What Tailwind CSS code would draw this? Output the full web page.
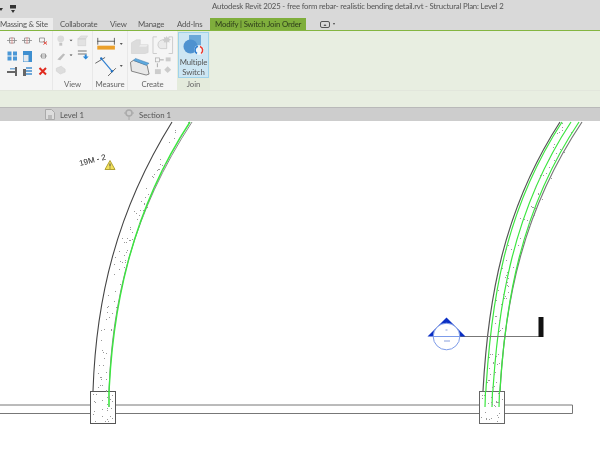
<!DOCTYPE html>
<html lang="en">
<head>
<meta charset="UTF-8" />
<title>Autodesk Revit 2025</title>
<script src="https://cdn.jsdelivr.net/npm/@tailwindcss/browser@4"></script>
</head>
<body class="bg-white font-['Lato',sans-serif] text-[#555] overflow-hidden">
<div class="w-[600px] h-[454px] flex flex-col overflow-hidden blur-[0.3px]">

  <!-- title bar -->
  <div class="h-[18px] bg-[#d9d9d9] flex items-center relative">
    <span class="w-0 h-0 border-x-[2px] border-x-transparent border-t-[3px] border-t-[#333] -ml-[1px] mr-[7px]"></span>
    <svg width="6" height="8" viewBox="0 0 6 8"><path d="M0 0h6v3.500h-6zM1 5h4l-2 3z" fill="#333"/></svg>
    <div class="absolute left-[212px] top-0 text-[7.8px] tracking-[-0.18px] leading-[13px] whitespace-nowrap">Autodesk Revit 2025 - free form rebar- realistic bending detail.rvt - Structural Plan: Level 2</div>
  </div>

  <!-- ribbon tabs -->
  <div class="h-[12px] bg-[#d9d9d9] flex items-stretch text-[7.8px] tracking-[-0.18px] leading-[12px] whitespace-nowrap">
    <div class="w-[53px] bg-[#ececec] overflow-hidden">Massing &amp; Site</div>
    <div class="ml-[7px] w-[50px]">Collaborate</div>
    <div class="w-[28px]">View</div>
    <div class="w-[39px]">Manage</div>
    <div class="w-[33px]">Add-Ins</div>
    <div class="w-[96px] bg-[#7fae3c] text-[#2d3d1a] pl-[5px]">Modify | Switch Join Order</div>
    <div class="ml-[14px] flex items-center gap-[3px]">
      <svg width="10" height="7" viewBox="0 0 10 7"><rect x=".5" y=".5" width="9" height="6" rx="1.500" fill="none" stroke="#555"/><path d="M3.500 5l1.500-2 1.500 2z" fill="#555"/></svg>
      <span class="w-0 h-0 border-x-[1.500px] border-x-transparent border-t-[2px] border-t-[#444]"></span>
    </div>
  </div>

  <!-- ribbon -->
  <div class="h-[60px] bg-[#e8eee1] border-t-[1px] border-t-[#84b541] flex text-[7.8px] tracking-[-0.1px] leading-[12px] text-[#666]">
    <div class="w-[52px] bg-[#f5f5f5] flex flex-col">
      <svg width="52" height="47" viewBox="0 30 52 47">
        <g fill="none" stroke="#8a8a8a" stroke-width=".8">
          <path d="M7 39.500h10M9.500 37h5v5h-5z"/><path d="M22 39.500h10M24.500 37h5v5h-5z"/>
          <path d="M39.500 37h5v4h-5z"/><path d="M40 55h7M41.500 53h4v4h-4z"/>
        </g>
        <path d="M12 36v7M27 36v7" stroke="#e88" stroke-width=".7"/>
        <path d="M43.500 40.500l3.500 3M47 40.500l-3.500 3" stroke="#e0453a"/>
        <path d="M7.500 50.500h4v4h-4zM13 50.500h4v4h-4zM7.500 55.500h4v4h-4zM13 55.500h4v4h-4z" fill="#4a97d6"/>
        <path d="M23 50h9v11h-9z" fill="#3e8fd0"/><path d="M23.500 54h5v6.500h-5z" fill="#e3e9ee"/>
        <path d="M7 70h8v-4h2v9h-2v-3h-8z" fill="#666"/><path d="M10 67h5v1.500h-5z" fill="#7aaedb"/>
        <path d="M26 66h6v2h-6zM26 69h6v2h-6zM26 72h6v2h-6z" fill="#6ea7d8"/><path d="M23 68h3v7h-3z" fill="#666"/>
        <path d="M39.500 67l6.500 6.500M46 67l-6.500 6.500" stroke="#e02a1e" stroke-width="2"/>
      </svg>
    </div>

    <div class="w-[40px] bg-[#f5f5f5] border-l-[1px] border-l-[#e8e8e8] flex flex-col">
      <svg width="39" height="47" viewBox="53 30 39 47" class="h-[47px]">
        <circle cx="60.500" cy="38" r="3.500" fill="#dcdcdc"/><path d="M59 42h3v3h-3z" fill="#c4c4c4"/>
        <path d="M69.500 39h3l-1.500 1.500z" fill="#444"/>
        <path d="M78 38h8v7h-8zM81 35h7l-2 3h-8z" fill="#e2e2e2" stroke="#ccc" stroke-width=".5"/>
        <path d="M57 59l6-6 2 1-5 6z" fill="#bdbdbd"/><path d="M69.500 54h3l-1.500 1.500z" fill="#444"/>
        <path d="M78 50h9v1h-9zM78 53h9v1h-9z" fill="#777"/><path d="M85 54h2v2h2l-3 3-3-3h2z" fill="#2a88d8"/>
        <path d="M56 68l5-2 4 3v3l-5 2-4-3z" fill="#ddd" stroke="#ccc" stroke-width=".5"/>
      </svg>
      <div class="text-center mt-[1px]">View</div>
    </div>

    <div class="w-[35px] bg-[#f5f5f5] border-l-[1px] border-l-[#e8e8e8] flex flex-col">
      <svg width="34" height="47" viewBox="93 30 34 47" class="h-[47px]">
        <path d="M97 40.500h18M97.500 37v7M114.500 37v7" stroke="#444" stroke-width=".8"/>
        <rect x="97" y="45" width="18" height="4" fill="#eba02a"/>
        <path d="M120 42.500h3l-1.500 1.500z" fill="#222"/>
        <path d="M95 63l10-6M108 76l8-8" stroke="#555" stroke-width=".9"/>
        <path d="M101 58l11 13" stroke="#2f7fd0" stroke-width="1.200"/>
        <circle cx="101" cy="58" r="1.200" fill="#1f6fc0"/><circle cx="112" cy="71" r="1.200" fill="#1f6fc0"/>
        <path d="M120 65h3l-1.500 1.500z" fill="#222"/>
      </svg>
      <div class="text-center mt-[1px]">Measure</div>
    </div>

    <div class="w-[50px] bg-[#f5f5f5] border-l-[1px] border-l-[#e8e8e8] flex flex-col">
      <svg width="49" height="47" viewBox="129 30 49 47" class="h-[47px]">
        <path d="M132 42l5-3h4v5h8v8l-3 1h-14z" fill="#dcdcdc" stroke="#d0d0d0" stroke-width=".6"/>
        <path d="M141 44h8l-2 2h-7z" fill="#ececec"/>
        <path d="M158 36h-4v17h4M170 36h4v17h-4" stroke="#ccc" fill="none"/>
        <path d="M160 47a5 5 0 0 1 4-8l4 3v6h-6z" fill="#eaeaea" stroke="#bbb" stroke-width=".6"/>
        <path d="M168 35l1 2 2-1-.5 2 2 1-2 1 .5 2-2-1-1 2-1-2-2 1 .5-2-2-1 2-1-.5-2 2 1z" fill="#ccc"/>
        <path d="M131 62l3-2 14 5 2 9-3 1-15-4z" fill="#e8e8e8" stroke="#666" stroke-width=".8"/>
        <path d="M134 60l2-2 14 5-3 2z" fill="#5da9de" stroke="#3d79ad" stroke-width=".5"/>
        <rect x="156.500" y="57.500" width="4" height="4" fill="none" stroke="#aaa" stroke-width=".7"/>
        <path d="M161 59.500h4" stroke="#888" stroke-width=".7"/><rect x="167" y="57" width="5" height="4" fill="#ccc"/>
        <path d="M158.500 63v4" stroke="#888" stroke-width=".7"/><rect x="156" y="69" width="6" height="5" fill="#ccc"/>
        <path d="M169 66l3.500 3.500-3.500 3.500-3.500-3.500z" fill="#ccc"/>
      </svg>
      <div class="text-center mt-[1px]">Create</div>
    </div>

    <div class="w-[33px] flex flex-col bg-[#e4ebdc]">
      <div class="w-[31px] h-[46px] ml-[1px] mt-[1px] bg-[#cde6f3] border-[1px] border-[#9fd2ea] flex flex-col items-center">
        <svg width="25" height="24" viewBox="0 0 25 24">
          <path d="M8 2h12v14h-12z" fill="#6ba8d8"/>
          <circle cx="9.500" cy="13.500" r="7" fill="#4e92d0"/>
          <circle cx="18" cy="17" r="4.800" fill="#f3f7fa"/>
          <path d="M16 20.500a4 4 0 0 1 1-7.300" stroke="#2f7fd0" stroke-width="1.500" fill="none"/>
          <path d="M19 13.500a4 4 0 0 1 1 7" stroke="#e8382e" stroke-width="1.500" fill="none"/>
        </svg>
        <div class="text-[7.8px] leading-[10px] text-center text-[#555]">Multiple<br />Switch</div>
      </div>
      <div class="text-center">Join</div>
    </div>
  </div>

  <!-- panel expander strip -->
  <div class="h-[17px] bg-[#e8eee1] border-t-[1px] border-t-[#e2e6dc]"></div>

  <!-- view tabs -->
  <div class="h-[14px] bg-[#cdcdcd] border-t-[1px] border-t-[#b9b9b9] flex items-center text-[7.8px] leading-[12px]">
    <svg width="10" height="11" viewBox="0 0 10 11" class="ml-[45px]"><path d="M.5.500h6l3 3v7h-9z" fill="#ddd" stroke="#aaa"/><path d="M3 6h4v4h-4z" fill="#bbb"/></svg>
    <span class="ml-[5px] w-[64px]">Level 1</span>
    <svg width="10" height="11" viewBox="0 0 10 11"><circle cx="5" cy="4" r="3" fill="none" stroke="#aaa" stroke-width="1.500"/><path d="M5 7v4M0 4h2M8 4h2" stroke="#aaa"/></svg>
    <span class="ml-[5px]">Section 1</span>
  </div>

  <!-- drawing canvas -->
  <div class="relative flex-1 bg-white">
    <svg id="canvas" class="block" width="600" height="333" viewBox="0 121 600 333" fill="none">
      <!-- slab -->
      <path d="M0 405H572.500V413.500H0" stroke="#777"/>

      <!-- left wall -->
      <path d="M172 122C116 212 96 300 93 391" stroke="#444" stroke-width="1.100"/>
      <path d="M192 122C133 212 112 300 109 391" stroke="#888"/>
      <path d="M190 122C131 212 111 310 108.500 407" stroke="#3be63f" stroke-width="1.400"/>

      <!-- right wall -->
      <path d="M560 122C503 210 488 300 483 391" stroke="#555" stroke-width="1.200"/>
      <path d="M582 122C523 210 505 300 500 391" stroke="#777" stroke-width="1.200"/>
      <path d="M562 122C505 210 490 300 485 407" stroke="#3be63f" stroke-width="1.200"/>
      <path d="M571 122C513 210 497 305 492 407" stroke="#3be63f" stroke-width="1.200"/>
      <path d="M579 122C520 210 504 305 499 407" stroke="#3be63f" stroke-width="1.200"/>

      <!-- footings -->
      <rect x="90.500" y="391.500" width="25" height="32" fill="white" stroke="#555"/>
      <rect x="479.500" y="391.500" width="25" height="32" fill="white" stroke="#666"/>
      <path d="M109 391V407" stroke="#3be63f" stroke-width="1.600"/>
      <path d="M485.500 391L485 407M492.500 391L492 407M499.500 391L499 407" stroke="#3be63f" stroke-width="1.200"/>
      <g id="dots" fill="#999"></g>

      <!-- tag and warning -->
      <text x="80" y="166" transform="rotate(-14 80 166)" font-size="8" fill="#222" font-family="Liberation Sans">19M - 2</text>
      <path d="M110 160.500L115 169.500H105Z" fill="#f3e25a" stroke="#b0a135" stroke-linejoin="round"/>
      <path d="M110 163.500v3M110 167.500v1" stroke="#444"/>

      <!-- section marker -->
      <path d="M446 336.500H540" stroke="#777"/>
      <path d="M446.500 317.500L465.500 336.500H427.500Z" fill="#0b2fc4"/>
      <circle cx="446.500" cy="336.500" r="13.300" fill="white" stroke="#7d9be8"/>
      <path d="M433 336.500H460" stroke="#7d9be8"/>
      <path d="M445.500 330h2M444 341h6" stroke="#8aa0dd"/>
      <rect x="538.500" y="317" width="5" height="20" fill="#111"/>
    </svg>
  </div>
</div>

<script>
// concrete speckle, scattered along each wall and inside the footings
let seed = 7;
function rnd() {
  seed = (seed * 16807) % 2147483647;
  return seed / 2147483647;
}

const walls = [
  [[172, 192, 122], [114, 131, 250], [97, 113, 340], [93, 109, 391]],
  [[560, 582, 122], [503, 522, 250], [493, 509, 300], [483, 500, 391]]
];
const dotsGroup = document.getElementById('dots');

function addDot(x, y) {
  const dot = document.createElementNS('http://www.w3.org/2000/svg', 'rect');
  dot.setAttribute('x', Math.round(x));
  dot.setAttribute('y', Math.round(y));
  dot.setAttribute('width', 1);
  dot.setAttribute('height', 1);
  dotsGroup.appendChild(dot);
}

walls.forEach(points => {
  for (let i = 0; i < points.length - 1; i++) {
    const a = points[i];
    const b = points[i + 1];
    const count = Math.round((b[2] - a[2]) / 3);
    for (let n = 0; n < count; n++) {
      const t = rnd();
      const y = a[2] + (b[2] - a[2]) * t;
      const left = a[0] + (b[0] - a[0]) * t;
      const right = a[1] + (b[1] - a[1]) * t;
      addDot(left + 2 + rnd() * (right - left - 5), y);
    }
  }
});

[90, 479].forEach(x => {
  for (let n = 0; n < 26; n++) addDot(x + 2 + rnd() * 21, 393 + rnd() * 29);
});
</script>
</body>
</html>
